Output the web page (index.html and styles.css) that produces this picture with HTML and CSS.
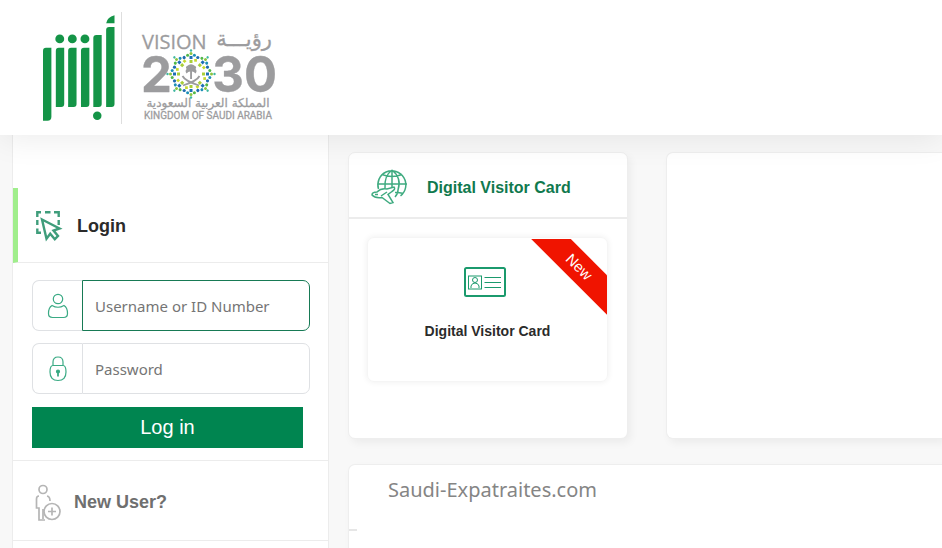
FILE: index.html
```html
<!DOCTYPE html>
<html lang="en">
<head>
<meta charset="utf-8">
<meta name="viewport" content="width=device-width, initial-scale=1">
<title>Absher</title>
<link rel="stylesheet" href="styles.css">
</head>
<body>
<header class="site-header">
  <svg class="absher-logo" viewBox="0 0 74 110" role="img" aria-label="Absher">
    <path d="M0 36q0-3 3-3h5.500v70q0 4-4 4H0z"/>
    <path d="M13 36q0-3 3-3h5.500v57q0 3-3 3H13z"/>
    <path d="M25.500 36q0-3 3-3H34v57q0 3-3 3h-5.500z"/>
    <path d="M38.500 36q0-3 3-3H47v57q0 3-3 3h-5.500z"/>
    <path d="M51 23q0-3 3-3h5.500v70q0 3-3 3H51z"/>
    <path d="M64 15q0-3 3-3h5.500v78q0 3-3 3H64z"/>
    <path d="M64 8q1-6 8.500-8v8z"/>
    <circle cx="17" cy="24" r="4.500"/><circle cx="29.700" cy="24" r="4.500"/><circle cx="42.500" cy="24" r="4.500"/><circle cx="55" cy="102" r="4.300"/>
  </svg>
  <svg class="vision-logo" viewBox="0 0 134 94" role="img" aria-label="Vision 2030, Kingdom of Saudi Arabia">
    <defs>
      <g id="ray">
        <rect x="-1.500" y="-14" width="3" height="3" fill="#a9cf3a"/>
        <rect x="-1.500" y="-18" width="3" height="3" fill="#1d6fb5"/>
        <circle cx="0" cy="-20.500" r="1.500" fill="#8bc540"/>
        <circle cx="0" cy="-23.500" r="1.200" fill="#3fb7a0"/>
        <rect x="3.200" y="-15" width="2.700" height="2.700" fill="#c5d92d"/>
        <circle cx="3.400" cy="-18.800" r="1.500" fill="#1c8fb5"/>
        <circle cx="-3.400" cy="-18.800" r="1.500" fill="#4fb748"/>
        <circle cx="6.800" cy="-16.500" r="1.600" fill="#1f6bb0"/>
      </g>
    </defs>
    <g class="vision-type">
      <text class="v-word" x="-1" y="21">VISION</text>
      <text class="v-ar" x="129" y="18" text-anchor="end">رؤيـــة</text>
      <text class="v-num" x="-2" y="64">2</text>
      <text class="v-num" x="134" y="64" text-anchor="end">30</text>
      <text class="v-ar-small" x="65" y="79" text-anchor="middle">المملكة العربية السعودية</text>
      <text class="v-kingdom" x="65" y="91" text-anchor="middle">KINGDOM OF SAUDI ARABIA</text>
    </g>
    <g transform="translate(48 46)">
      <use href="#ray"/><use href="#ray" transform="rotate(45)"/><use href="#ray" transform="rotate(90)"/><use href="#ray" transform="rotate(135)"/><use href="#ray" transform="rotate(180)"/><use href="#ray" transform="rotate(225)"/><use href="#ray" transform="rotate(270)"/><use href="#ray" transform="rotate(315)"/>
      <path class="palm" d="M-.9 5V-2.500q-2 0-3.500 2-2-2.500 0-4.500-1.500-2 .5-3Q0-11.500 4-8q2 1 .5 3 2 2 0 4.500-1.500-2-3.500-2V5z"/>
      <path class="swords" d="M-8.500 2Q-6 7 8 11.500M8.500 2Q6 7-8 11.500"/>
    </g>
  </svg>
</header>

<div class="layout">
  <aside class="sidebar">
    <h2 class="side-tab side-tab-active">
      <svg class="icon-login" viewBox="0 0 27 31" aria-hidden="true">
        <path d="M1.300 6V1.300H5M9 1.300h5.500M18 1.300h4.700V6M22.700 9v5M1.300 9v5M1.300 17.500v4.200H5"/>
        <path d="m6 8.500 17.500 9-6 2 4.500 5.500-3.200 3.200-4.600-5.500-3.700 5z"/>
      </svg>
      Login
    </h2>
    <form class="login-form">
      <div class="field">
        <label class="field-icon" for="username" aria-label="Username or ID Number">
          <svg viewBox="0 0 22 26" aria-hidden="true"><circle cx="11" cy="6" r="4.700"/><path d="M5 12.500Q11 16 17 12.500q3.500 2 3.500 8 0 4-4 4h-11q-4 0-4-4 0-6 3.500-8z"/></svg>
        </label>
        <input class="field-input field-input-active" id="username" type="text" placeholder="Username or ID Number">
      </div>
      <div class="field">
        <label class="field-icon" for="password" aria-label="Password">
          <svg viewBox="0 0 22 26" aria-hidden="true"><path d="M6 9.500V6q0-5 5-5t5 5v3.500M6 9.500h10q3 0 3 6.500 0 8.500-8 8.500T3 16q0-6.500 3-6.500z"/><circle cx="11" cy="15.500" r="1.500" class="keyhole"/><path d="M11 15v5.500" class="keyslot"/></svg>
        </label>
        <input class="field-input" id="password" type="password" placeholder="Password">
      </div>
      <button class="login-button" type="submit">Log in</button>
    </form>
    <h2 class="side-tab side-tab-muted">
      <svg class="icon-user" viewBox="0 0 26 37" aria-hidden="true">
        <circle cx="8" cy="5.500" r="4"/>
        <path d="M4 12Q1.500 12 1.500 15v9H4v12h6M12 12q3 .500 3 5M8 25v10"/>
        <circle cx="17" cy="27.500" r="8"/><path d="M17 23.500v8M13 27.500h8"/>
      </svg>
      <a class="side-link" href="#">New User?</a>
    </h2>
  </aside>

  <main class="content">
    <section class="panel service">
      <header class="service-head">
        <svg class="icon-globe" viewBox="0 0 38 36" aria-hidden="true">
          <path d="M7.500 20A14 14 0 1 1 29.500 26.800M21 1v18M7 15h29M21 1q-8 6-7 18M21 1q10 8 6 20 0 4-3 7M11 5.500q10 4 20 0M24 23.500q5 0 8.500 1"/>
          <path d="M1 26q0-3 5-3 4-4 10-3l7-2q2 2-2 4.500l-4 3 5 8-3 1-8-6q-7 1-10-2.500zM10 27l6-4M4 25.500h3"/>
        </svg>
        <h2 class="service-title">Digital Visitor Card</h2>
      </header>
      <a class="tile" href="#">
        <svg class="icon-card" viewBox="0 0 42 30" aria-hidden="true">
          <rect class="thick" x="1" y="1" width="40" height="28" rx="1.500"/>
          <rect x="4.500" y="9" width="13" height="13"/>
          <circle cx="11" cy="13" r="2.500"/><path d="M7 21v-2q1-3 4-3t4 3v2M20.500 10.500H37M20.500 15.500H37M20.500 20.500H37"/>
        </svg>
        <span class="tile-label">Digital Visitor Card</span>
        <span class="ribbon"><span class="ribbon-text">New</span></span>
      </a>
    </section>
    <section class="panel panel-bleed"></section>
    <section class="panel panel-bleed panel-wide">
      <p class="site-name">Saudi-Expatraites.com</p>
      <hr class="stub">
    </section>
  </main>
</div>
</body>
</html>
```

FILE: styles.css
```css
* { box-sizing: border-box; }

body {
  margin: 0;
  min-height: 100vh;
  display: flex;
  flex-direction: column;
  overflow-x: hidden;
  background: #f8f8f8;
  color: #2b2b2b;
  font-family: "Liberation Sans", Arial, sans-serif;
}

h2, p { margin: 0; }
a { color: inherit; text-decoration: none; }
svg { display: block; flex: none; fill: none; }

.site-header {
  position: relative;
  z-index: 1;
  display: flex;
  align-items: flex-start;
  padding: 12px 43px 11px;
  background: #fff;
  box-shadow: 0 4px 30px rgba(0, 0, 0, 0.08);
}

.absher-logo {
  width: 79px;
  height: 112px;
  padding: 3px 5px 0 0;
  border-right: 1px solid #dedede;
  fill: #149447;
}

.vision-logo {
  width: 134px;
  height: 94px;
  margin: 16px 0 0 21px;
  overflow: visible;
}

.vision-type { fill: #9c9c9e; stroke: #9c9c9e; stroke-width: 0.3; }
.v-word { font: 20px "Open Sans", sans-serif; }
.v-ar { font: 21px "DejaVu Sans", sans-serif; }
.v-num { font: 700 49px Inter, sans-serif; }
.v-ar-small { font: 12px "DejaVu Sans", sans-serif; }
.v-kingdom { font: 10px Roboto, sans-serif; }
.palm { fill: #9c9c9e; }
.swords { stroke: #9c9c9e; stroke-width: 1.8; }

.layout {
  flex: 1;
  display: flex;
  gap: 19px;
  padding-left: 12px;
}

.sidebar {
  flex: none;
  width: 317px;
  padding-top: 53px;
  background: #fff;
  border: 1px solid #ececec;
  border-top: 0;
  border-bottom: 0;
}

.side-tab {
  display: flex;
  align-items: center;
  border-bottom: 1px solid #ececec;
  font-size: 18px;
  font-weight: 700;
}

.side-tab-active {
  gap: 14px;
  height: 75px;
  padding: 2px 0 0 18px;
  border-left: 5px solid #a0ee8c;
}

.side-tab-muted {
  gap: 13px;
  height: 80px;
  padding: 3px 0 0 22px;
  color: #6f6f6f;
}

.icon-login { width: 27px; height: 31px; stroke: #3f9d7b; stroke-width: 2.4; }
.icon-user { width: 26px; height: 37px; stroke: #b5b5b5; stroke-width: 1.7; }

.login-form {
  display: flex;
  flex-direction: column;
  gap: 12px;
  padding: 17px 18px 12px 19px;
  border-bottom: 1px solid #ececec;
}

.field { display: flex; height: 51px; }

.field-icon {
  flex: none;
  display: grid;
  place-items: center;
  width: 50px;
  border: 1px solid #dfe1e4;
  border-right: 0;
  border-radius: 7px 0 0 7px;
}

.field-icon svg { width: 22px; height: 26px; stroke: #3aaa84; stroke-width: 1.2; }
.field-icon .keyhole { fill: #16976b; }
.field-icon .keyslot { stroke-width: 1.8; }

.field-input {
  flex: 1;
  min-width: 0;
  padding: 0 12px;
  border: 1px solid #dfe1e4;
  border-radius: 0 7px 7px 0;
  outline: 0;
  background: #fff;
  color: #444;
  font: 15px "Noto Sans", sans-serif;
}

.field-input::placeholder { color: #757575; opacity: 1; }
.field-input-active { border-color: #177a55; }

.login-button {
  height: 41px;
  margin: 1px 7px 0 0;
  border: 0;
  background: #008550;
  color: #fff;
  font: 20px "Liberation Sans", Arial, sans-serif;
}

.content {
  flex: 1;
  min-width: 0;
  display: grid;
  grid-template-columns: 280px 1fr;
  grid-template-rows: 287px 1fr;
  gap: 25px 38px;
  padding-top: 17px;
}

.panel {
  background: #fff;
  border: 1px solid #eee;
  border-radius: 7px;
  box-shadow: 3px 4px 8px rgba(0, 0, 0, 0.05);
}

.panel-bleed { border-right: 0; border-radius: 7px 0 0 7px; }
.panel-wide { grid-column: 1 / -1; border-bottom: 0; border-radius: 7px 0 0 0; }

.service-head {
  display: flex;
  align-items: center;
  gap: 18px;
  height: 66px;
  padding: 4px 0 0 22px;
  border-bottom: 2px solid #ececec;
}

.icon-globe { width: 38px; height: 36px; stroke: #3fab80; stroke-width: 1.5; }
.service-title { padding-top: 2px; color: #10794e; font-size: 16px; }

.tile {
  position: relative;
  display: flex;
  flex-direction: column;
  align-items: center;
  gap: 26px;
  height: 145px;
  margin: 18px 19px 0 18px;
  padding-top: 29px;
  border: 1px solid #f5f5f5;
  border-radius: 7px;
  box-shadow: 0 0 6px rgba(0, 0, 0, 0.07);
}

.icon-card { width: 42px; height: 30px; margin-right: 6px; stroke: #1b9a6d; stroke-width: 1; }
.icon-card .thick { stroke-width: 2; }
.tile-label { font-size: 14px; font-weight: 700; }

.ribbon {
  position: absolute;
  top: 1px;
  right: 0;
  width: 76px;
  height: 76px;
  overflow: hidden;
}

.ribbon-text {
  position: absolute;
  top: 14px;
  left: -12px;
  width: 120px;
  background: #f01400;
  color: #fff;
  font-size: 15px;
  line-height: 28px;
  text-align: center;
  transform: rotate(45deg);
}

.site-name {
  padding: 10px 0 0 39px;
  color: #858585;
  font: 20px/30px "Noto Sans", sans-serif;
}

.stub {
  width: 8px;
  height: 2px;
  margin: 24px 0 0;
  border: 0;
  background: #e6e6e6;
}
```
